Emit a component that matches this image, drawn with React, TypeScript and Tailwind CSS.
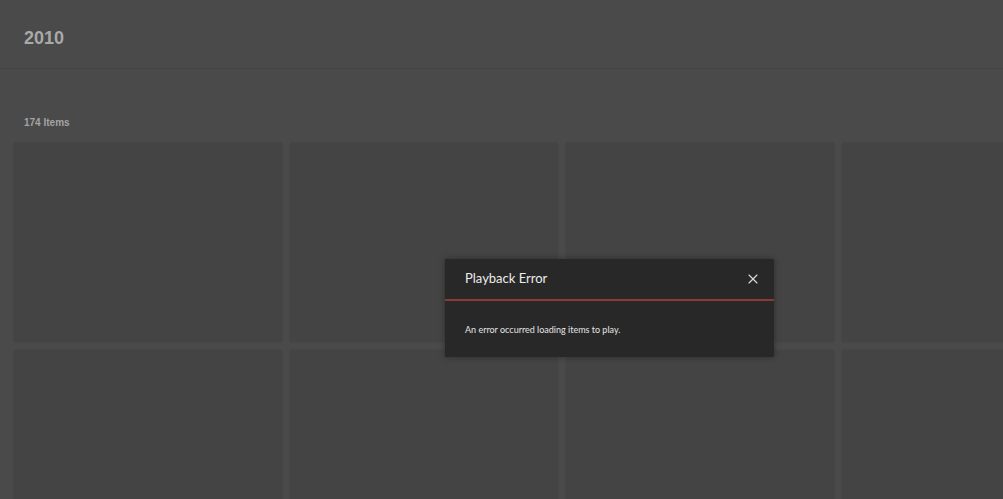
import React from 'react';
import { X } from 'lucide-react';

const tiles = Array.from({ length: 8 });

const App: React.FC = () => {
  return (
    <div
      className="relative h-[499px] w-[1003px] overflow-hidden bg-[#4a4a4a]"
      style={{ fontFamily: '"Liberation Sans", Arial, sans-serif' }}
    >
      {/* Header */}
      <div className="h-[69px] border-b border-[#444444] px-6 pt-[26px]">
        <h1 className="text-[18px] font-bold leading-6 text-[#a9a9a9]">2010</h1>
      </div>

      {/* Items */}
      <div className="px-[14px] pt-[47px]">
        <p className="pl-[10px] text-[10px] font-bold leading-[14px] text-[#a4a4a4]">174 Items</p>
        <div className="mt-[13px] grid w-[1100px] grid-cols-[repeat(4,268px)] gap-[8px]">
          {tiles.map((_, i) => (
            <div key={i} className="h-[199px] rounded-[2px] bg-[#444444] shadow-[0_0_2px_rgba(0,0,0,0.15)]" />
          ))}
        </div>
      </div>

      {/* Playback error dialog */}
      <div
        className="absolute left-[445px] top-[259px] w-[329px] bg-[#282828] shadow-[0_0_6px_rgba(0,0,0,0.35)]"
        style={{ fontFamily: 'Lato, "Open Sans", sans-serif' }}
      >
        <div className="flex h-[42px] items-center justify-between border-b-[2px] border-[#8a3b35] pl-[20px] pr-[13px]">
          <span className="text-[13px] text-[#ececec]">Playback Error</span>
          <X className="h-[16px] w-[16px] text-[#d8d8d8]" strokeWidth={1.75} />
        </div>
        <div className="h-[56px] pl-[20px] pt-[22px]">
          <p className="text-[9px] leading-[14px] text-[#e4e4e4]">An error occurred loading items to play.</p>
        </div>
      </div>
    </div>
  );
};

export default App;
